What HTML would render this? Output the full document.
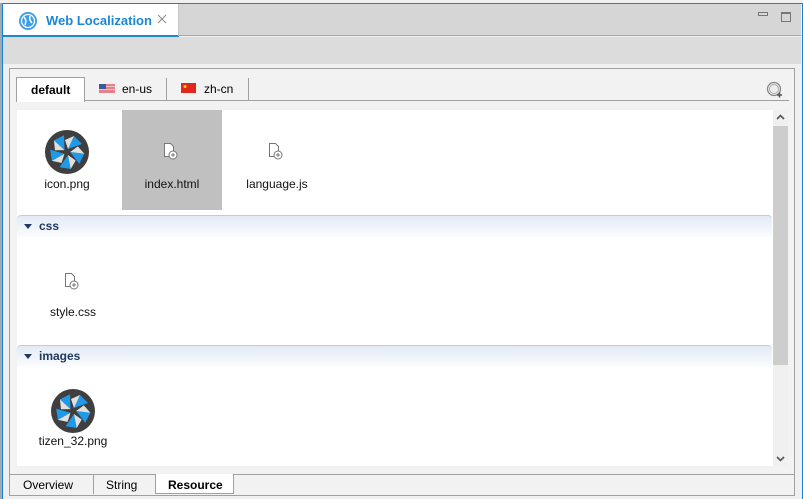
<!DOCTYPE html>
<html><head><meta charset="utf-8"><style>
*{margin:0;padding:0;box-sizing:border-box}
body{width:803px;height:499px;overflow:hidden;background:#f0f0f0;font-family:"Liberation Sans",sans-serif;font-size:12px;color:#000;position:relative}
.a{position:absolute}
.lbl{position:absolute;text-align:center;font-size:12px;color:#111}
.sec{position:absolute;left:17px;width:755px;height:22px;border-top:1px solid #b9cde5;border-radius:4px 4px 0 0;background:linear-gradient(#e2eaf5,#fbfcfe);font-weight:bold;color:#1f3a60;font-size:12px;padding:3px 0 0 22px}
.sec:before{content:"";position:absolute;left:7px;top:8px;border-left:4px solid transparent;border-right:4px solid transparent;border-top:5px solid #1f3a60}
</style></head><body>
<div class="a" style="left:0;top:0;width:803px;height:3px;background:#f0f0f0"></div>
<div class="a" style="left:0;top:3px;width:2px;height:496px;background:#a8a8a8"></div>
<div class="a" style="left:2px;top:3px;width:801px;height:496px;border:1px solid #0a84e0;border-bottom:none"></div>
<div class="a" style="left:3px;top:4px;width:798px;height:32px;background:#d6d6d6;border-bottom:1px solid #a6a6a6"></div>
<div class="a" style="left:3px;top:4px;width:176px;height:33px;background:#fff;border-right:1px solid #c8c8c8;border-bottom:2px solid #1a8ad8"></div>
<svg class="a" style="left:18px;top:11px" width="20" height="20" viewBox="0 0 20 20"><circle cx="10" cy="10" r="9" fill="#3d9ee6"/><circle cx="10" cy="10" r="6.5" fill="none" stroke="#fff" stroke-width="1.3"/><path d="M6 6 Q9 9 7 14 M12 5 Q11 9 14 12" stroke="#fff" stroke-width="1.5" fill="none"/></svg>
<div class="a" style="left:46px;top:13px;font-weight:bold;color:#1b86d6;font-size:13px">Web Localization</div>
<svg class="a" style="left:157px;top:14px" width="10" height="10"><path d="M1 1L9 9M9 1L1 9" stroke="#888" stroke-width="1"/></svg>
<div class="a" style="left:758px;top:12px;width:10px;height:4px;border:1px solid #777"></div>
<div class="a" style="left:781px;top:12px;width:10px;height:10px;border:1px solid #777;border-top-width:2px"></div>
<div class="a" style="left:3px;top:37px;width:798px;height:27px;background:#dcdcdc"></div>
<div class="a" style="left:9px;top:68px;width:786px;height:428px;border:1px solid #a0a0a0;background:#f2f2f2"></div>
<div class="a" style="left:16px;top:100px;width:773px;height:1px;background:#a0a0a0"></div>
<div class="a" style="left:16px;top:77px;width:69px;height:25px;background:#fff;border:1px solid #a0a0a0;border-bottom:none;font-weight:bold;padding:5px 0 0 14px">default</div>
<div class="a" style="left:166px;top:78px;width:1px;height:22px;background:#a0a0a0"></div>
<div class="a" style="left:248px;top:78px;width:1px;height:22px;background:#a0a0a0"></div>
<svg class="a" style="left:99px;top:84px" width="16" height="9"><rect width="16" height="9" fill="#e8808a"/><rect y="2" width="16" height="1" fill="#f3c0c4"/><rect y="5" width="16" height="1" fill="#f3c0c4"/><rect width="7" height="5" fill="#3a5a9a"/></svg>
<div class="a" style="left:122px;top:82px;font-size:12px">en-us</div>
<svg class="a" style="left:181px;top:83px" width="15" height="10"><rect width="15" height="10" fill="#e0281c"/><circle cx="4" cy="3.5" r="1.5" fill="#f5d000"/></svg>
<div class="a" style="left:204px;top:82px;font-size:12px">zh-cn</div>
<svg class="a" style="left:766px;top:81px" width="17" height="17"><circle cx="8" cy="8" r="6.5" fill="#eee" stroke="#888" stroke-width="1.3"/><circle cx="8" cy="8" r="4.5" fill="none" stroke="#aaa"/><path d="M11 14h5M13.5 11.5v5" stroke="#555" stroke-width="1.5"/></svg>
<div class="a" style="left:17px;top:110px;width:756px;height:356px;background:#fff"></div>
<div class="a" style="left:773px;top:110px;width:15px;height:356px;background:#f0f0f0"></div>
<div class="a" style="left:773px;top:126px;width:15px;height:239px;background:#cdcdcd"></div>
<svg class="a" style="left:776px;top:114px" width="9" height="6"><path d="M1 5L4.5 1.5L8 5" stroke="#555" stroke-width="1.6" fill="none"/></svg>
<svg class="a" style="left:776px;top:456px" width="9" height="6"><path d="M1 1L4.5 4.5L8 1" stroke="#555" stroke-width="1.6" fill="none"/></svg>
<svg width="0" height="0" style="position:absolute"><defs>
<g id="tz"><circle r="22" fill="#3f3f3f"/><g id="bl"><path d="M1 -3 L7 -16 L15 -8 Z" fill="#1f9ae8"/><path d="M1 -3 L-2 -12 L7 -16 Z" fill="#e0e0e0"/></g><use href="#bl" transform="rotate(72)"/><use href="#bl" transform="rotate(144)"/><use href="#bl" transform="rotate(216)"/><use href="#bl" transform="rotate(288)"/></g>
<g id="doc"><path d="M0.5 0.5h6l3 3v10h-9z" fill="#fff" stroke="#777"/><circle cx="9" cy="12" r="4" fill="#fff" stroke="#777"/><path d="M7 12h4M9 10v4" stroke="#777"/></g>
</defs></svg>
<svg class="a" style="left:45px;top:130px" width="44" height="44"><use href="#tz" transform="translate(22,22)"/></svg>
<div class="lbl" style="left:17px;top:177px;width:100px">icon.png</div>
<div class="a" style="left:122px;top:110px;width:100px;height:100px;background:#c0c0c0"></div>
<svg class="a" style="left:164px;top:143px" width="16" height="18"><use href="#doc"/></svg>
<div class="lbl" style="left:122px;top:177px;width:100px">index.html</div>
<svg class="a" style="left:269px;top:143px" width="16" height="18"><use href="#doc"/></svg>
<div class="lbl" style="left:227px;top:177px;width:100px">language.js</div>
<div class="sec" style="top:215px">css</div>
<svg class="a" style="left:65px;top:273px" width="16" height="18"><use href="#doc"/></svg>
<div class="lbl" style="left:23px;top:305px;width:100px">style.css</div>
<div class="sec" style="top:345px">images</div>
<svg class="a" style="left:51px;top:389px" width="44" height="44"><use href="#tz" transform="translate(22,22)"/></svg>
<div class="lbl" style="left:23px;top:434px;width:100px">tizen_32.png</div>
<div class="a" style="left:10px;top:474px;width:785px;height:1px;background:#a0a0a0"></div>
<div class="a" style="left:93px;top:475px;width:1px;height:19px;background:#a0a0a0"></div>
<div class="a" style="left:155px;top:474px;width:79px;height:20px;background:#fff;border:1px solid #a0a0a0;border-top:none"></div>
<div class="a" style="left:23px;top:478px">Overview</div>
<div class="a" style="left:106px;top:478px">String</div>
<div class="a" style="left:168px;top:478px;font-weight:bold">Resource</div>
</body></html>
